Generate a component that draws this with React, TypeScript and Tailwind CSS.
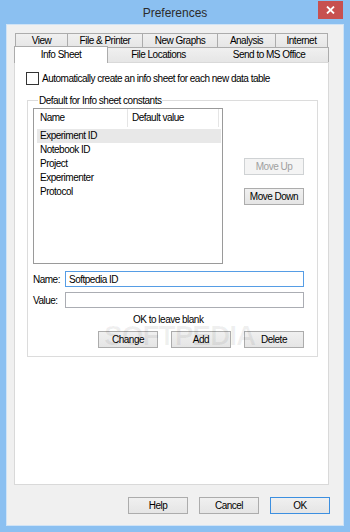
import type { ReactNode } from 'react';

const font = { fontFamily: '"Liberation Sans", Arial, sans-serif' };

const rowOneTabs = [
  { label: 'View', w: 'w-[53px]' },
  { label: 'File & Printer', w: 'w-[76px]' },
  { label: 'New Graphs', w: 'w-[76px]' },
  { label: 'Analysis', w: 'w-[59px]' },
  { label: 'Internet', w: 'w-[53px]' },
];

const rows = ['Experiment ID', 'Notebook ID', 'Project', 'Experimenter', 'Protocol'];

const WinButton = ({
  children,
  disabled,
  isDefault,
  className = '',
}: {
  children: ReactNode;
  disabled?: boolean;
  isDefault?: boolean;
  className?: string;
}) => (
  <button
    type="button"
    className={`flex items-center justify-center w-[60px] h-[17px] border text-[10px] tracking-[-0.5px] leading-none ${
      disabled
        ? 'border-[#cfd2d4] bg-[#f4f4f4] text-[#a0a0a0]'
        : isDefault
          ? 'border-[#3c8fe0] bg-gradient-to-b from-[#f0f0f0] to-[#e5e5e5] text-black'
          : 'border-[#acacac] bg-gradient-to-b from-[#f0f0f0] to-[#e5e5e5] text-black'
    } ${className}`}
  >
    {children}
  </button>
);

export default function App() {
  return (
    <div
      className="relative w-[350px] h-[532px] bg-[#8bc0f1] flex flex-col text-black text-[10px] tracking-[-0.5px]"
      style={font}
    >
      {/* title bar */}
      <div className="grid grid-cols-[1fr_auto_1fr] h-[24px] items-start">
        <div />
        <div className="pt-[6px] text-[12px] tracking-normal leading-[14px] text-[#2b2b2b]">Preferences</div>
        <div className="justify-self-end mr-[7px] mt-[1px] w-[25px] h-[18px] bg-[#c75050] flex items-center justify-center">
          <svg width="9" height="8" viewBox="0 0 9 8">
            <path d="M1 0.5 L8 7.5 M8 0.5 L1 7.5" stroke="white" strokeWidth="1.8" />
          </svg>
        </div>
      </div>

      {/* client */}
      <div className="mx-[6px] mb-[6px] flex-1 border border-[#cfe3f6] bg-[#f0f0f0] pl-[7px] pr-[13px] pt-[8px] flex flex-col">
        {/* tab row 1 */}
        <div className="flex h-[14px] pl-[1px]">
          {rowOneTabs.map((t, i) => (
            <div
              key={t.label}
              className={`${t.w} ${i > 0 ? '-ml-[1px]' : ''} h-[14px] border-t border-l border-r border-[#acacac] bg-gradient-to-b from-[#f0f0f0] to-[#e6e6e6] flex items-center justify-center pt-[1px] leading-[12px]`}
            >
              {t.label}
            </div>
          ))}
        </div>
        {/* tab row 2 */}
        <div className="flex items-end h-[15px]">
          <div className="relative z-10 w-[94px] h-[17px] -mb-[1px] border-t border-l border-r border-[#acacac] bg-white flex items-start justify-center pt-[2px] leading-[12px]">
            Info Sheet
          </div>
          <div className="-ml-[1px] w-[104px] h-[15px] border-t border-r border-[#acacac] bg-gradient-to-b from-[#f0f0f0] to-[#e6e6e6] flex items-center justify-center leading-[12px]">
            File Locations
          </div>
          <div className="-ml-[1px] w-[119px] h-[15px] border-t border-r border-[#acacac] bg-gradient-to-b from-[#f0f0f0] to-[#e6e6e6] flex items-center justify-center leading-[12px]">
            Send to MS Office
          </div>
        </div>

        {/* panel */}
        <div className="w-[315px] h-[423px] border border-[#d9d9d9] bg-white pl-[11px] pt-[9px] flex flex-col">
          <label className="flex items-center gap-[3px] leading-[13px]">
            <span className="w-[13px] h-[13px] border border-[#333333] bg-white" />
            <span>Automatically create an info sheet for each new data table</span>
          </label>

          <fieldset className="mt-[9px] ml-[1px] w-[291px] border border-[#dcdcdc] px-[5px] pb-[8px]">
            <legend className="ml-[5px] px-[1px] leading-[13px]">Default for Info sheet constants</legend>

            <div className="flex mt-[1px]">
              <div className="w-[190px] h-[156px] border border-[#9a9a9a] bg-white px-[3px] leading-[14px]">
                <div className="flex h-[18px] items-center">
                  <div className="w-[92px] h-full border-r border-[#e5e5e5] pl-[3px] flex items-center">Name</div>
                  <div className="w-[92px] h-full border-r border-[#e5e5e5] pl-[4px] flex items-center">Default value</div>
                </div>
                <div className="pt-[2px]">
                  {rows.map((r, i) => (
                    <div key={r} className={`h-[14px] pl-[3px] ${i === 0 ? 'bg-[#e8e8e8] w-[184px]' : ''}`}>
                      {r}
                    </div>
                  ))}
                </div>
              </div>
              <div className="ml-[21px] pt-[50px] flex flex-col gap-[13px]">
                <WinButton disabled>Move Up</WinButton>
                <WinButton>Move Down</WinButton>
              </div>
            </div>

            <div className="mt-[7px] flex items-center leading-[13px]">
              <span className="w-[32px]">Name:</span>
              <div className="w-[239px] h-[16px] border border-[#569de5] bg-white pl-[3px] flex items-center">Softpedia ID</div>
            </div>
            <div className="mt-[5px] flex items-center leading-[13px]">
              <span className="w-[32px]">Value:</span>
              <div className="w-[239px] h-[16px] border border-[#abadb3] bg-white" />
            </div>

            <div className="mt-[5px] pl-[100px] leading-[13px]">OK to leave blank</div>

            <div className="mt-[5px] ml-[65px] flex gap-[13px]">
              <WinButton>Change</WinButton>
              <WinButton>Add</WinButton>
              <WinButton>Delete</WinButton>
            </div>
          </fieldset>
        </div>

        {/* dialog buttons */}
        <div className="mt-[12px] flex justify-end gap-[11px]">
          <WinButton>Help</WinButton>
          <WinButton>Cancel</WinButton>
          <WinButton isDefault>OK</WinButton>
        </div>
      </div>

      {/* watermark */}
      <div className="absolute left-[104px] top-[320px] text-[28px] font-bold tracking-[-1px] leading-[32px] text-black/[0.06] pointer-events-none">
        SOFTPEDIA
      </div>
    </div>
  );
}
